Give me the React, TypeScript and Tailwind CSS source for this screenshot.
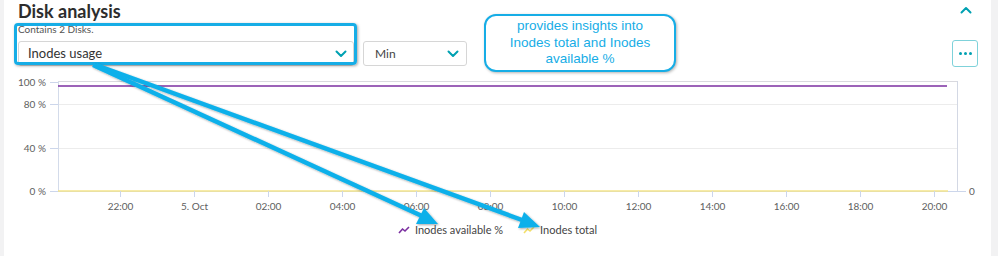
import React from 'react';

const ticks = ['22:00', '5. Oct', '02:00', '04:00', '06:00', '08:00', '10:00', '12:00', '14:00', '16:00', '18:00', '20:00'];
const yLabels = [
  { label: '100 %', y: 81 },
  { label: '80 %', y: 103 },
  { label: '40 %', y: 147 },
  { label: '0 %', y: 190 },
];

const Chevron = ({ up = false }: { up?: boolean }) => (
  <svg width="12" height="8" viewBox="0 0 12 8" fill="none">
    <path
      d={up ? 'M1.5 6.5 L6 2 L10.5 6.5' : 'M1.5 1.5 L6 6 L10.5 1.5'}
      stroke="#00a1b2"
      strokeWidth="2"
      strokeLinecap="round"
      strokeLinejoin="round"
    />
  </svg>
);

const Chart = () => (
  <svg width="987" height="145" viewBox="4 75 987 145" className="block" style={{ fontFamily: 'Lato, sans-serif' }}>
    <line x1="58" y1="80.5" x2="957" y2="80.5" stroke="#d9d9de" />
    <line x1="957.5" y1="80" x2="957.5" y2="190" stroke="#d3d8e4" />
    <line x1="58" y1="103.5" x2="957" y2="103.5" stroke="#ececec" />
    <line x1="58" y1="147.5" x2="957" y2="147.5" stroke="#ececec" />
    <line x1="58.5" y1="80" x2="58.5" y2="191" stroke="#d3dbea" />
    {yLabels.map((l) => (
      <g key={l.label}>
        <line x1="50" y1={l.y + 0.5} x2="58" y2={l.y + 0.5} stroke="#ccd6eb" />
        <text x="46" y={l.y + 4} textAnchor="end" fontSize="10" fill="#606060">
          {l.label}
        </text>
      </g>
    ))}
    <line x1="50" y1="190.5" x2="966" y2="190.5" stroke="#ccd6eb" />
    <line x1="58" y1="190" x2="948" y2="190" stroke="#f4e58a" strokeWidth="1.5" />
    <line x1="58" y1="85" x2="947" y2="85" stroke="#7b2fa0" strokeWidth="1.5" />
    {ticks.map((t, i) => {
      const x = 120.5 + i * 74;
      return (
        <g key={t}>
          <line x1={x} y1="190" x2={x} y2="196" stroke="#ccd6eb" />
          <text x={x} y="209" textAnchor="middle" fontSize="10" fill="#606060">
            {t}
          </text>
        </g>
      );
    })}
    <text x="969" y="194" fontSize="10" fill="#606060">
      0
    </text>
  </svg>
);

const Arrows = () => (
  <svg
    width="987"
    height="256"
    viewBox="4 0 987 256"
    className="absolute left-0 top-0 pointer-events-none"
  >
    <defs>
      <filter id="sh" x="-10%" y="-10%" width="120%" height="120%">
        <feDropShadow dx="1" dy="1" stdDeviation="1" floodColor="#000" floodOpacity="0.35" />
      </filter>
    </defs>
    <g filter="url(#sh)" fill="#0cb0ea" stroke="#0cb0ea">
      <line x1="93" y1="65" x2="422" y2="216" strokeWidth="4.5" />
      <polygon points="438,224 416,224 424,208" stroke="none" />
      <line x1="96" y1="65" x2="522" y2="220" strokeWidth="4.5" />
      <polygon points="540,227 518,228 524,212" stroke="none" />
    </g>
  </svg>
);

export default function App() {
  return (
    <div className="w-[998px] h-[256px] flex bg-[#f2f2f3] overflow-hidden" style={{ fontFamily: 'Lato, sans-serif' }}>
      <div className="relative ml-[4px] w-[987px] h-full bg-white">
        <div className="flex items-start justify-between pl-[14px] pr-[19px]">
          <div>
            <h2 className="text-[18px] leading-[20px] font-bold text-[#2d2d2d] pt-[1px]">Disk analysis</h2>
            <p className="mt-[2px] text-[10px] leading-[12px] text-[#555]">Contains 2 Disks.</p>
          </div>
          <div className="pt-[6px]">
            <Chevron up />
          </div>
        </div>

        <div className="flex items-center mt-[5px] pl-[14px] pr-[13px]">
          <div className="flex items-center justify-between w-[336px] h-[25px] border border-[#d6d6d6] rounded-[3px] pl-[9px] pr-[6px]">
            <span className="text-[13px] text-[#333]">Inodes usage</span>
            <Chevron />
          </div>
          <div className="flex items-center justify-between w-[104px] h-[25px] ml-[9px] border border-[#d6d6d6] rounded-[3px] pl-[11px] pr-[7px]">
            <span className="text-[12px] text-[#444]">Min</span>
            <Chevron />
          </div>
          <div className="ml-auto flex items-center justify-center gap-[2px] w-[26px] h-[27px] border border-[#7fd2da] rounded-[3px]">
            <span className="w-[3px] h-[3px] rounded-full bg-[#00a1b2]" />
            <span className="w-[3px] h-[3px] rounded-full bg-[#00a1b2]" />
            <span className="w-[3px] h-[3px] rounded-full bg-[#00a1b2]" />
          </div>
        </div>

        <div className="mt-[9px]">
          <Chart />
        </div>

        <div className="flex justify-center items-center gap-[20px] mt-[1px] text-[11px] text-[#444]">
          <div className="flex items-center gap-[5px]">
            <svg width="12" height="8" viewBox="0 0 12 8">
              <path d="M1 7 L4.5 3 L7 5 L11 1" stroke="#7b2fa0" strokeWidth="1.6" fill="none" />
            </svg>
            <span>Inodes available %</span>
          </div>
          <div className="flex items-center gap-[5px]">
            <svg width="12" height="8" viewBox="0 0 12 8">
              <path d="M1 7 L4.5 3 L7 5 L11 1" stroke="#f4e06a" strokeWidth="1.6" fill="none" />
            </svg>
            <span>Inodes total</span>
          </div>
        </div>

        <div className="absolute left-[10px] top-[23px] w-[343px] h-[42px] border-[3px] border-[#16ade6] rounded-[4px] shadow-[1px_1px_3px_rgba(0,0,0,0.35)]" />

        <div
          className="absolute left-[480px] top-[14px] w-[192px] h-[58px] border-[2.5px] border-[#16ade6] rounded-[12px] shadow-[1px_1px_3px_rgba(0,0,0,0.3)] bg-white flex items-center justify-center text-center text-[13.5px] leading-[16.5px] text-[#16ade6]"
          style={{ fontFamily: '"Liberation Sans", Arial, sans-serif' }}
        >
          <span>
            provides insights into
            <br />
            Inodes total and Inodes
            <br />
            available %
          </span>
        </div>

        <Arrows />
      </div>
      <div className="flex-1" />
    </div>
  );
}
